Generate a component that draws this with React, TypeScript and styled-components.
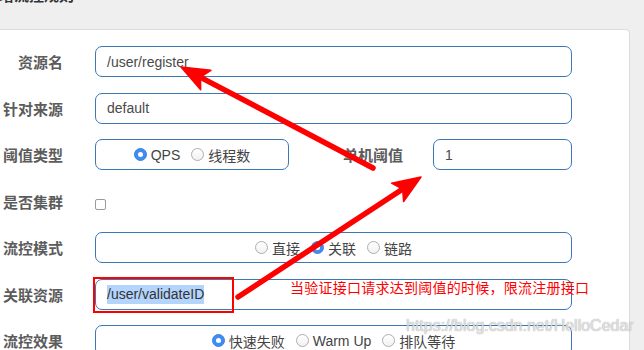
import React from 'react'
import styled, { createGlobalStyle } from 'styled-components'

const GlobalStyle = createGlobalStyle`
  html, body {
    margin: 0;
    padding: 0;
    background: #efefef;
  }
  * {
    box-sizing: border-box;
  }
`

const Page = styled.div`
  position: relative;
  width: 644px;
  height: 350px;
  overflow: hidden;
  background: #efefef;
  font-family: 'Liberation Sans', 'Noto Sans CJK SC', sans-serif;
`

const Header = styled.div`
  height: 29px;
  overflow: hidden;
`

const Title = styled.div`
  margin: -15px 0 0 -16px;
  font-family: 'Noto Sans CJK SC', sans-serif;
  font-size: 15px;
  line-height: 20px;
  font-weight: 700;
  color: #333;
`

const Panel = styled.div`
  width: 630px;
  height: 321px;
  background: #fff;
  border-top: 1px solid #dcdcdc;
  border-right: 1px solid #dcdcdc;
  border-top-right-radius: 5px;
  padding-top: 16px;
`

const Form = styled.div`
  display: flex;
  flex-direction: column;
  gap: 15.5px;
`

const Row = styled.div`
  display: flex;
  align-items: center;
  height: 31px;
`

const Label = styled.div<{ $width?: number; $gap?: number }>`
  width: ${p => p.$width ?? 63}px;
  margin-right: ${p => p.$gap ?? 32}px;
  flex-shrink: 0;
  text-align: right;
  white-space: nowrap;
  font-family: 'Noto Sans CJK SC', sans-serif;
  font-size: 15px;
  font-weight: 700;
  color: #5c5c5c;
`

const Field = styled.div<{ $width?: number; $center?: boolean }>`
  width: ${p => p.$width ?? 477}px;
  height: 31px;
  flex-shrink: 0;
  display: flex;
  align-items: center;
  justify-content: ${p => (p.$center ? 'center' : 'flex-start')};
  padding: 0 11px;
  border: 1px solid #3b78b6;
  border-radius: 7px;
  font-size: 14px;
  color: #4a4a4a;
  white-space: nowrap;
`

const Selected = styled.span`
  background: #b3d4fd;
  color: #333;
  line-height: 19px;
`

const Option = styled.span`
  display: inline-flex;
  align-items: center;
  gap: 4px;
  & + & {
    margin-left: 11px;
  }
  font-family: 'Liberation Sans', 'Noto Sans CJK SC', sans-serif;
  font-size: 14px;
  color: #444;
`

const RadioDot = styled.span<{ $checked?: boolean }>`
  width: 13px;
  height: 13px;
  border-radius: 50%;
  flex-shrink: 0;
  display: inline-flex;
  align-items: center;
  justify-content: center;
  background: ${p => (p.$checked ? '#3f8cf3' : 'linear-gradient(#fff, #f1f1f1)')};
  border: 1px solid ${p => (p.$checked ? '#3a82e6' : '#aeaeae')};
  &::after {
    content: '';
    display: ${p => (p.$checked ? 'block' : 'none')};
    width: 5px;
    height: 5px;
    border-radius: 50%;
    background: #fff;
  }
`

const Checkbox = styled.span`
  width: 11px;
  height: 11px;
  margin-top: 6px;
  border: 1px solid #9b9b9b;
  border-radius: 2px;
  background: #fff;
`

const Note = styled.div`
  position: absolute;
  left: 290px;
  top: 277px;
  font-family: 'Noto Sans CJK SC', sans-serif;
  font-size: 14px;
  line-height: 20px;
  letter-spacing: 0.25px;
  color: #ff0000;
  white-space: nowrap;
`

const Watermark = styled.div`
  position: absolute;
  left: 406px;
  top: 316px;
  font-family: 'Liberation Sans', sans-serif;
  font-size: 16px;
  line-height: 20px;
  color: rgba(238, 238, 238, 0.85);
  text-shadow: 0 0 1px rgba(110, 110, 110, 0.8);
  white-space: nowrap;
`

const Overlay = styled.svg`
  position: absolute;
  left: 0;
  top: 0;
  pointer-events: none;
`

type Opt = { label: string; checked?: boolean }

const Radios = ({ options }: { options: Opt[] }) => (
  <>
    {options.map(o => (
      <Option key={o.label}>
        <RadioDot $checked={o.checked} />
        {o.label}
      </Option>
    ))}
  </>
)

// tip, barb, notch, barb
const arrowHead = (tx: number, ty: number, fx: number, fy: number) => {
  const dx = tx - fx
  const dy = ty - fy
  const len = Math.hypot(dx, dy)
  const ux = dx / len
  const uy = dy / len
  const nx = -uy
  const ny = ux
  const bx = tx - ux * 28
  const by = ty - uy * 28
  const mx = tx - ux * 22
  const my = ty - uy * 22
  const w = 11
  return {
    points: `${tx},${ty} ${bx + nx * w},${by + ny * w} ${mx},${my} ${bx - nx * w},${by - ny * w}`,
    neck: [tx - ux * 20, ty - uy * 20] as [number, number],
  }
}

const Arrow = ({ from, to }: { from: [number, number]; to: [number, number] }) => {
  const head = arrowHead(to[0], to[1], from[0], from[1])
  return (
    <g fill="#ff0000" stroke="#ff0000">
      <line
        x1={from[0]}
        y1={from[1]}
        x2={head.neck[0]}
        y2={head.neck[1]}
        strokeWidth={5.5}
        strokeLinecap="round"
      />
      <polygon points={head.points} strokeWidth={1.5} strokeLinejoin="round" />
    </g>
  )
}

export default function App() {
  return (
    <Page>
      <GlobalStyle />
      <Header>
        <Title>新增流控规则</Title>
      </Header>
      <Panel>
        <Form>
          <Row>
            <Label>资源名</Label>
            <Field>/user/register</Field>
          </Row>
          <Row>
            <Label>针对来源</Label>
            <Field>default</Field>
          </Row>
          <Row>
            <Label>阈值类型</Label>
            <Field $width={194} $center>
              <Radios options={[{ label: 'QPS', checked: true }, { label: '线程数' }]} />
            </Field>
            <Label $width={114} $gap={30}>
              单机阈值
            </Label>
            <Field $width={139}>1</Field>
          </Row>
          <Row>
            <Label>是否集群</Label>
            <Checkbox />
          </Row>
          <Row>
            <Label>流控模式</Label>
            <Field $center>
              <Radios options={[{ label: '直接' }, { label: '关联', checked: true }, { label: '链路' }]} />
            </Field>
          </Row>
          <Row>
            <Label>关联资源</Label>
            <Field>
              <Selected>/user/validateID</Selected>
            </Field>
          </Row>
          <Row>
            <Label>流控效果</Label>
            <Field $center>
              <Radios
                options={[{ label: '快速失败', checked: true }, { label: 'Warm Up' }, { label: '排队等待' }]}
              />
            </Field>
          </Row>
        </Form>
      </Panel>

      <Overlay width={644} height={350} viewBox="0 0 644 350">
        <rect x={94} y={278} width={139} height={34} fill="none" stroke="#ff0000" strokeWidth={2} />
        <Arrow from={[373, 168]} to={[181, 67]} />
        <Arrow from={[238, 297]} to={[421, 177]} />
      </Overlay>
      <Note>当验证接口请求达到阈值的时候，限流注册接口</Note>
      <Watermark>https://blog.csdn.net/HelloCedar</Watermark>
    </Page>
  )
}
